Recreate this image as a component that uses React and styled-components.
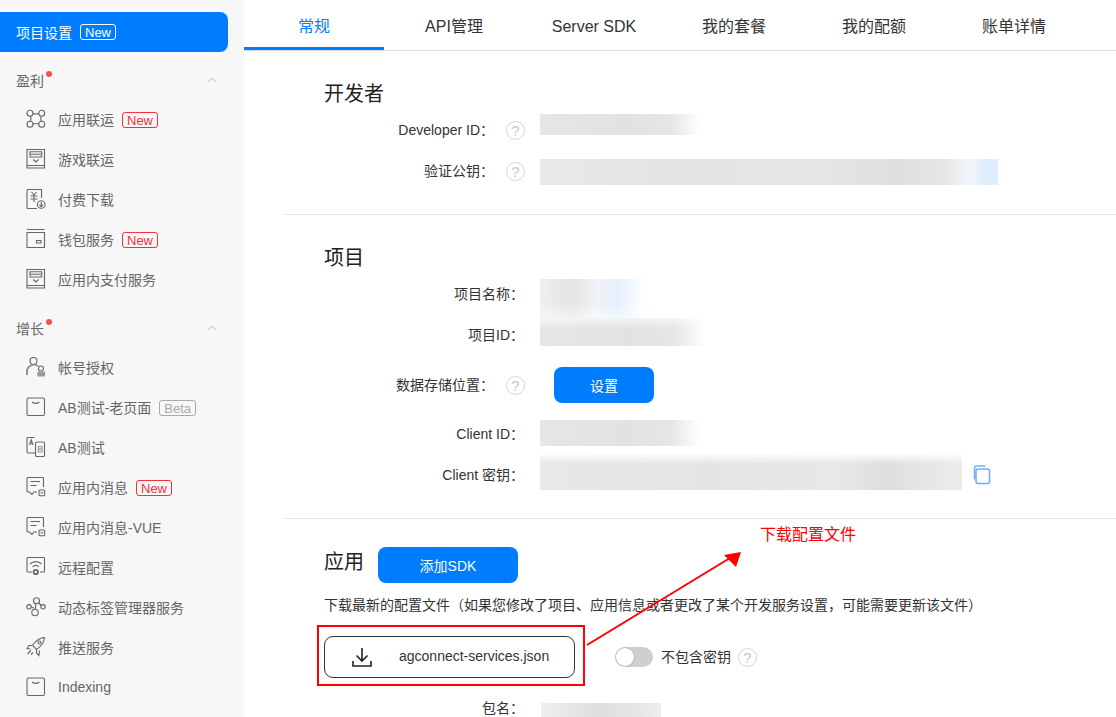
import React from 'react'
import styled, { createGlobalStyle } from 'styled-components'

const GlobalStyle = createGlobalStyle`
  html, body {
    margin: 0;
    padding: 0;
    overflow: hidden;
    background: #fff;
  }
  * {
    box-sizing: border-box;
  }
`

const Page = styled.div`
  position: relative;
  display: flex;
  width: 1116px;
  height: 717px;
  overflow: hidden;
  font-family: "Liberation Sans", "Noto Sans CJK SC", sans-serif;
  font-size: 14px;
  color: #333;
`

/* sidebar */
const Sidebar = styled.nav`
  flex: 0 0 244px;
  padding-top: 12px;
  background: #f7f7f7;
`

const ActiveItem = styled.div`
  display: flex;
  align-items: center;
  width: 228px;
  height: 40px;
  padding-left: 16px;
  border-radius: 0 8px 8px 0;
  background: #007dff;
  color: #fff;
`

const GroupHeader = styled.div`
  display: flex;
  align-items: center;
  justify-content: space-between;
  width: 228px;
  height: 40px;
  margin-top: 8px;
  padding: 0 11px 0 16px;
  color: #666;
`

const GroupTitle = styled.span`
  position: relative;
  &::after {
    content: '';
    position: absolute;
    top: 1px;
    right: -8px;
    width: 6px;
    height: 6px;
    border-radius: 50%;
    background: #fa5050;
  }
`

const Badge = styled.span`
  display: inline-flex;
  align-items: center;
  justify-content: center;
  height: 16px;
  margin-left: 8px;
  padding: 0 4px;
  border: 1px solid ${p => p.$color};
  border-radius: 3px;
  color: ${p => p.$color};
  font-size: 13px;
`

const Item = styled.div`
  display: flex;
  align-items: center;
  height: 40px;
  padding: 0 0 2px 26px;
  color: #666;
  ${Badge} {
    margin-top: 2px;
  }
`

const ItemIcon = styled.svg`
  flex: none;
  width: 20px;
  height: 20px;
  margin-right: 12px;
  fill: none;
  stroke: #666;
  stroke-width: 1.1;
`

/* main */
const Main = styled.main`
  flex: 1;
  min-width: 0;
`

const Tabs = styled.div`
  display: flex;
  height: 51px;
  border-bottom: 1px solid #ddd;
`

const Tab = styled.div`
  width: 140px;
  height: 50px;
  padding-top: 8px;
  border-bottom: 3px solid ${p => (p.$active ? '#007dff' : 'transparent')};
  color: ${p => (p.$active ? '#007dff' : '#333')};
  font-size: 16px;
  line-height: 38px;
  text-align: center;
`

const Content = styled.div`
  padding-left: 40px;
`

const Section = styled.section`
  padding: ${p => p.$top}px 0 ${p => p.$bottom}px 40px;
  border-bottom: ${p => (p.$plain ? 'none' : '1px solid #e5e5e5')};
`

const Heading = styled.h2`
  margin: 0 0 4px;
  color: #222;
  font-size: 20px;
  font-weight: 400;
  line-height: 24px;
`

const Row = styled.div`
  display: flex;
  align-items: flex-start;
  height: 40px;
  margin: ${p => p.$margin || '0 0 1px'};
`

const LabelCell = styled.div`
  display: flex;
  flex: 0 0 201px;
  align-items: center;
  justify-content: flex-end;
  height: 40px;
  padding-right: ${p => (p.$help ? 0 : 1)}px;
  margin-right: 15px;
  color: #333;
`

const LabelText = styled.span`
  margin-bottom: 2px;
`

const HelpMark = styled.span`
  display: inline-flex;
  flex: none;
  align-items: center;
  justify-content: center;
  width: 19px;
  height: 19px;
  margin-left: ${p => p.$gap}px;
  border: 1.5px solid #d6d6d6;
  border-radius: 50%;
  color: #c8c8c8;
  font-size: 15px;
  line-height: 1;
`

const Redacted = styled.div`
  flex: none;
  width: ${p => p.$w}px;
  height: ${p => p.$h}px;
  margin-top: ${p => p.$top}px;
  margin-left: ${p => p.$left || 0}px;
  background: ${p => p.$fill};
  mask-image: ${p => p.$mask || 'none'};
`

const PrimaryButton = styled.button`
  display: flex;
  align-items: center;
  justify-content: center;
  width: ${p => p.$w}px;
  height: 36px;
  padding: 0;
  border: none;
  border-radius: 8px;
  background: #007dff;
  color: #fff;
  font-family: inherit;
  font-size: 14px;
`

const SettingButton = styled(PrimaryButton)`
  margin: 2px 0 0 14px;
`

const CopyIcon = styled.svg`
  width: 20px;
  height: 20px;
  margin: 10px 0 0 9px;
  fill: none;
  stroke: #6db0f8;
  stroke-width: 1.6;
`

const AppHead = styled.div`
  display: flex;
  gap: 14px;
`

const AppHeading = styled(Heading)`
  margin: 3px 0 0;
`

const Hint = styled.p`
  margin: 12px 0 0;
  color: #333;
  line-height: 20px;
`

const DownloadRow = styled.div`
  display: flex;
  align-items: center;
  margin-top: 21px;
`

const DownloadButton = styled.div`
  display: flex;
  align-items: center;
  width: 251px;
  height: 42px;
  padding-left: 27px;
  border: 1px solid #333;
  border-radius: 9px;
  color: #333;
`

const DownloadIcon = styled.svg`
  width: 20px;
  height: 20px;
  margin-right: 27px;
  fill: none;
  stroke: #222;
  stroke-width: 1.6;
`

const Toggle = styled.span`
  display: flex;
  align-items: center;
  width: 38px;
  height: 20px;
  margin: 0 8px 0 40px;
  padding-left: 1px;
  border-radius: 10px;
  background: #cfcfcf;
  &::before {
    content: '';
    width: 18px;
    height: 18px;
    border-radius: 50%;
    background: #fff;
    box-shadow: 0 0 2px rgba(0, 0, 0, .3);
  }
`

const NameRow = styled(Row)`
  margin-top: 10px;
`

/* hand drawn annotation over the screenshot */
const RedBox = styled.div`
  position: absolute;
  left: 317px;
  top: 625px;
  width: 268px;
  height: 61px;
  border: 2px solid #f00;
`

const Arrow = styled.svg`
  position: absolute;
  left: 580px;
  top: 540px;
  width: 170px;
  height: 115px;
`

const RedNote = styled.span`
  position: absolute;
  left: 760px;
  top: 525px;
  color: #f00;
  font-size: 16px;
  line-height: 20px;
`

const iconPaths = {
  link: (
    <>
      <circle cx="4" cy="4.3" r="3" />
      <circle cx="15.7" cy="4.3" r="3" />
      <circle cx="4" cy="15.3" r="3" />
      <circle cx="15.7" cy="15.3" r="3" />
      <path d="M7 4.5Q10 5.5 12.7 4.5M7 15Q10 14 12.700 15M4.500 7.300Q5.500 10 4.500 12.300M15.200 7.300Q14.200 10 15.200 12.300" />
    </>
  ),
  book: (
    <>
      <path d="M1 .5h17.5V19H1zM1 16.5h17.5" />
      <path d="M4 2.800h11.700V8H4zM4 5.300h11.700M7 10.500l2.800 2.500 2.800-2.500" />
    </>
  ),
  price: (
    <>
      <path d="M15.500 9V.5H2a1 1 0 0 0-1 1v17a1 1 0 0 0 1 1h9" />
      <path d="M5.500 3l2.500 3 2.500-3M4.500 7h7M4.500 10h7M8 6v7" />
      <circle cx="15.2" cy="15.5" r="3.8" />
      <path d="M15.200 13v4.500M13.500 16l1.700 1.600 1.700-1.600" />
    </>
  ),
  wallet: (
    <>
      <path d="M1 .5h17.500M1 3.500h17.500V18.500H1z" />
      <path d="M10.500 11.500h4.500v2.500h-4.500z" />
    </>
  ),
  account: (
    <>
      <circle cx="7.5" cy="4" r="3.5" />
      <path d="M1 18v-3.500a7 7 0 0 1 11-5.500" strokeWidth="1.8" stroke="#888" />
      <circle cx="15" cy="11.5" r="2.5" />
      <path d="M12 15h6.500v4H12z" fill="#999" stroke="#999" />
    </>
  ),
  tray: (
    <>
      <rect x="1" y="1" width="17.5" height="17.5" rx="1.5" />
      <path d="M6 5q3.700 2.800 7.500 0" />
    </>
  ),
  ab: (
    <>
      <path d="M8.500 .5H2a1 1 0 0 0-1 1V15a1 1 0 0 0 1 1h7" />
      <rect x="9.5" y="5" width="9" height="14.5" rx="1.2" />
      <path d="M3.500 8l1.800-5 1.700 5M4.200 6.500h2.200" />
      <path d="M12.500 9.500h3.500v5.500h-3.500zM12.500 12.200h3.500" stroke="#999" strokeWidth="1.2" />
    </>
  ),
  message: (
    <>
      <path d="M11 15H8l-2 2.500L3.500 15H2a1 1 0 0 1-1-1V1.500a1 1 0 0 1 1-1h14.500a1 1 0 0 1 1 1V10" />
      <path d="M4.500 4.500h9.500M4.500 8.500h6" />
      <rect x="13" y="13" width="5.7" height="5.7" rx="1" />
      <path d="M14.500 15.800h2.700" />
    </>
  ),
  remote: (
    <>
      <path d="M6 15H2a1 1 0 0 1-1-1V1.500a1 1 0 0 1 1-1h15.500a1 1 0 0 1 1 1V14a1 1 0 0 1-1 1H14" />
      <path d="M4 7a8.200 8.200 0 0 1 11.500 0M6.500 9.800a5 5 0 0 1 6.500 0" />
      <circle cx="9.8" cy="15" r="2.2" strokeWidth="1.8" />
    </>
  ),
  graph: (
    <>
      <circle cx="10.5" cy="3.8" r="3" />
      <circle cx="3" cy="9.8" r="2.2" />
      <circle cx="17" cy="9.8" r="2.2" />
      <circle cx="9" cy="15.5" r="3.2" />
      <path d="M5 9.800l3 1.500M9.800 6.700l-.5 5.600M12.800 6l2.500 2.500" />
    </>
  ),
  rocket: (
    <>
      <path d="M18.500 .5c-6 .5-9 3.500-12 8l4 4c4.500-3 7.500-6 8-12z" />
      <path d="M6.500 8.500H3L1 11.500l3.500.5M10.500 12.500V16l2.500 2.500.5-5" />
      <circle cx="13.5" cy="5.5" r="1.5" />
      <path d="M5 13.500l-3.500 3.500M7 15.500l-2 2" />
    </>
  ),
}

const NavItem = ({ icon, label, badge, badgeColor = '#f0323c' }) => (
  <Item>
    <ItemIcon viewBox="0 0 20 20">{iconPaths[icon]}</ItemIcon>
    {label}
    {badge && <Badge $color={badgeColor}>{badge}</Badge>}
  </Item>
)

const Group = ({ title }) => (
  <GroupHeader>
    <GroupTitle>{title}</GroupTitle>
    <svg width="10" height="6" viewBox="0 0 10 6" fill="none" stroke="#bbb">
      <path d="M.5 5.500L5 1l4.500 4.500" />
    </svg>
  </GroupHeader>
)

const Label = ({ children, help }) => (
  <LabelCell $help={help}>
    <LabelText>{children}</LabelText>
    {help && <HelpMark $gap={12}>?</HelpMark>}
  </LabelCell>
)

const tabs = ['常规', 'API管理', 'Server SDK', '我的套餐', '我的配额', '账单详情']

const fadeRight = '#e6e6e6 0%, #e2e2e2 55%, #e6e6e6 82%, #fff 100%'

export default function App() {
  return (
    <Page>
      <GlobalStyle />
      <Sidebar>
        <ActiveItem>
          项目设置
          <Badge $color="#fff">New</Badge>
        </ActiveItem>
        <Group title="盈利" />
        <NavItem icon="link" label="应用联运" badge="New" />
        <NavItem icon="book" label="游戏联运" />
        <NavItem icon="price" label="付费下载" />
        <NavItem icon="wallet" label="钱包服务" badge="New" />
        <NavItem icon="book" label="应用内支付服务" />
        <Group title="增长" />
        <NavItem icon="account" label="帐号授权" />
        <NavItem icon="tray" label="AB测试-老页面" badge="Beta" badgeColor="#aaa" />
        <NavItem icon="ab" label="AB测试" />
        <NavItem icon="message" label="应用内消息" badge="New" />
        <NavItem icon="message" label="应用内消息-VUE" />
        <NavItem icon="remote" label="远程配置" />
        <NavItem icon="graph" label="动态标签管理器服务" />
        <NavItem icon="rocket" label="推送服务" />
        <NavItem icon="tray" label="Indexing" />
      </Sidebar>

      <Main>
        <Tabs>
          {tabs.map((t, i) => (
            <Tab key={t} $active={i === 0}>{t}</Tab>
          ))}
        </Tabs>
        <Content>
          <Section $top={31} $bottom={22}>
            <Heading>开发者</Heading>
            <Row>
              <Label help>Developer ID：</Label>
              <Redacted $w={160} $h={21} $top={4} $fill={`linear-gradient(90deg, ${fadeRight})`} />
            </Row>
            <Row>
              <Label help>验证公钥：</Label>
              <Redacted $w={458} $h={26} $top={8} $fill="linear-gradient(90deg, #ebe9e9 0%, #e3e3e3 30%, #e6e6e6 60%, #dfdfdf 78%, #e6e6e6 88%, #f2f6fb 94%, #dfeefc 97%)" />
            </Row>
          </Section>

          <Section $top={31} $bottom={22}>
            <Heading>项目</Heading>
            <Row>
              <Label>项目名称：</Label>
              <Redacted
                $w={104}
                $h={39}
                $top={5}
                $fill="linear-gradient(90deg, #efefef 0%, #e4e4e4 30%, #f0f2f5 55%, #e4effc 75%, #fff 100%)"
                $mask="linear-gradient(180deg, #000 60%, rgba(0,0,0,.5) 100%)"
              />
            </Row>
            <Row>
              <Label>项目ID：</Label>
              <Redacted $w={165} $h={28} $top={3} $fill={`linear-gradient(90deg, ${fadeRight})`} $mask="linear-gradient(180deg, rgba(0,0,0,.4), #000 40%)" />
            </Row>
            <Row $margin="10px 0 9px">
              <Label help>数据存储位置：</Label>
              <SettingButton $w={100}>设置</SettingButton>
            </Row>
            <Row>
              <Label>Client ID：</Label>
              <Redacted $w={160} $h={26} $top={6} $fill={`linear-gradient(90deg, ${fadeRight})`} />
            </Row>
            <Row>
              <Label>Client 密钥：</Label>
              <Redacted
                $w={422}
                $h={37}
                $top={-2}
                $fill="linear-gradient(90deg, #e8e8e8 0%, #e4e4e4 40%, #e8e8e8 70%, #dedede 82%, #e6e6e6 92%, #ececec 100%)"
                $mask="linear-gradient(180deg, transparent, #000 30%)"
              />
              <CopyIcon viewBox="0 0 20 20">
                <path d="M3.500 14.500V3A2 2 0 0 1 5.500 1h9" />
                <rect x="5" y="4" width="13.5" height="14.5" rx="2" />
              </CopyIcon>
            </Row>
          </Section>

          <Section $top={28} $bottom={0} $plain>
            <AppHead>
              <AppHeading>应用</AppHeading>
              <PrimaryButton $w={140}>添加SDK</PrimaryButton>
            </AppHead>
            <Hint>下载最新的配置文件（如果您修改了项目、应用信息或者更改了某个开发服务设置，可能需要更新该文件）</Hint>
            <DownloadRow>
              <DownloadButton>
                <DownloadIcon viewBox="0 0 20 20">
                  <path d="M10 1v13M4.500 8.500L10 14l5.500-5.500M1 14v5h18v-5" />
                </DownloadIcon>
                <LabelText>agconnect-services.json</LabelText>
              </DownloadButton>
              <Toggle />
              <LabelText>不包含密钥</LabelText>
              <HelpMark $gap={7}>?</HelpMark>
            </DownloadRow>
            <NameRow>
              <Label>包名：</Label>
              <Redacted $w={120} $h={14} $top={15} $left={1} $fill="linear-gradient(90deg, #eee 0%, #dedede 50%, #e6e6e6 80%, #eee 100%)" />
            </NameRow>
          </Section>
        </Content>
      </Main>

      <RedBox />
      <Arrow viewBox="0 0 170 115">
        <path d="M7 105L150 18" stroke="#f00" strokeWidth="2" fill="none" />
        <path d="M161 12L144 15 156 27z" fill="#f00" />
      </Arrow>
      <RedNote>下载配置文件</RedNote>
    </Page>
  )
}
